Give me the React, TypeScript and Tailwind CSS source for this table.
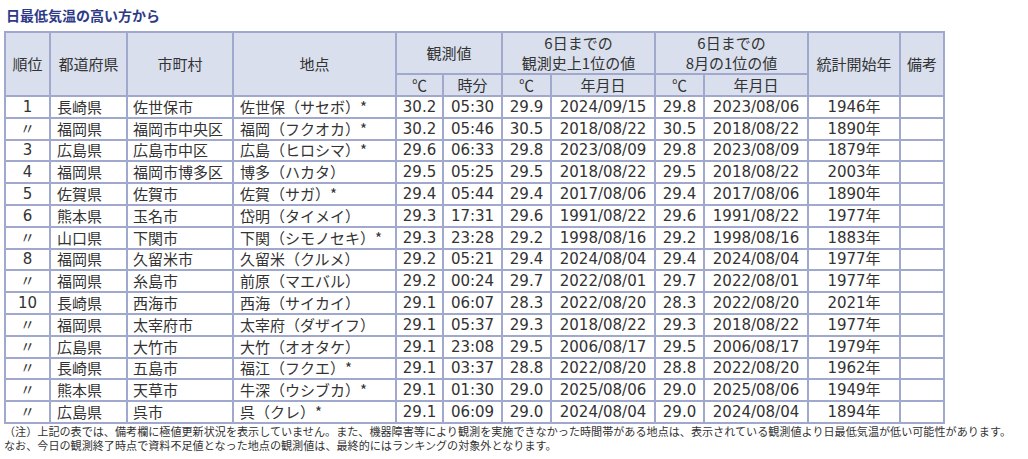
const rows: string[][] = [
  ["1", "長崎県", "佐世保市", "佐世保（サセボ）*", "30.2", "05:30", "29.9", "2024/09/15", "29.8", "2023/08/06", "1946年"],
  ["〃", "福岡県", "福岡市中央区", "福岡（フクオカ）*", "30.2", "05:46", "30.5", "2018/08/22", "30.5", "2018/08/22", "1890年"],
  ["3", "広島県", "広島市中区", "広島（ヒロシマ）*", "29.6", "06:33", "29.8", "2023/08/09", "29.8", "2023/08/09", "1879年"],
  ["4", "福岡県", "福岡市博多区", "博多（ハカタ）", "29.5", "05:25", "29.5", "2018/08/22", "29.5", "2018/08/22", "2003年"],
  ["5", "佐賀県", "佐賀市", "佐賀（サガ）*", "29.4", "05:44", "29.4", "2017/08/06", "29.4", "2017/08/06", "1890年"],
  ["6", "熊本県", "玉名市", "岱明（タイメイ）", "29.3", "17:31", "29.6", "1991/08/22", "29.6", "1991/08/22", "1977年"],
  ["〃", "山口県", "下関市", "下関（シモノセキ）*", "29.3", "23:28", "29.2", "1998/08/16", "29.2", "1998/08/16", "1883年"],
  ["8", "福岡県", "久留米市", "久留米（クルメ）", "29.2", "05:21", "29.4", "2024/08/04", "29.4", "2024/08/04", "1977年"],
  ["〃", "福岡県", "糸島市", "前原（マエバル）", "29.2", "00:24", "29.7", "2022/08/01", "29.7", "2022/08/01", "1977年"],
  ["10", "長崎県", "西海市", "西海（サイカイ）", "29.1", "06:07", "28.3", "2022/08/20", "28.3", "2022/08/20", "2021年"],
  ["〃", "福岡県", "太宰府市", "太宰府（ダザイフ）", "29.1", "05:37", "29.3", "2018/08/22", "29.3", "2018/08/22", "1977年"],
  ["〃", "広島県", "大竹市", "大竹（オオタケ）", "29.1", "23:08", "29.5", "2006/08/17", "29.5", "2006/08/17", "1979年"],
  ["〃", "長崎県", "五島市", "福江（フクエ）*", "29.1", "03:37", "28.8", "2022/08/20", "28.8", "2022/08/20", "1962年"],
  ["〃", "熊本県", "天草市", "牛深（ウシブカ）*", "29.1", "01:30", "29.0", "2025/08/06", "29.0", "2025/08/06", "1949年"],
  ["〃", "広島県", "呉市", "呉（クレ）*", "29.1", "06:09", "29.0", "2024/08/04", "29.0", "2024/08/04", "1894年"],
];

const th = "border-2 border-[#a0a9cd] bg-[#d9dfed] font-normal text-center align-middle p-0";
const td = "border-2 border-[#a0a9cd] p-0 h-[21.8px] align-middle whitespace-nowrap";
// Meiryo-like wide digits for the number columns
const num = "text-center font-['DejaVu_Sans','Noto_Sans_CJK_JP',sans-serif]";

export default function App() {
  return (
    <div className="bg-white min-h-screen pl-[4px] pt-[6px] text-[#333] font-['Noto_Sans_CJK_JP',sans-serif]">
      <div className="text-[14px] leading-[18px] font-bold text-[#2e3a87] pl-[2px]">日最低気温の高い方から</div>

      <table className="mt-[7px] table-fixed border-collapse w-[941px] text-[15px] leading-[18px]">
        <colgroup>
          <col className="w-[45px]" />
          <col className="w-[77px]" />
          <col className="w-[106px]" />
          <col className="w-[163px]" />
          <col className="w-[47px]" />
          <col className="w-[59px]" />
          <col className="w-[49px]" />
          <col className="w-[104px]" />
          <col className="w-[49px]" />
          <col className="w-[104px]" />
          <col className="w-[92px]" />
          <col className="w-[44px]" />
        </colgroup>
        <thead className="leading-[20px]">
          <tr className="h-[42px]">
            <th rowSpan={2} className={th}>順位</th>
            <th rowSpan={2} className={th}>都道府県</th>
            <th rowSpan={2} className={th}>市町村</th>
            <th rowSpan={2} className={th}>地点</th>
            <th colSpan={2} className={th}>観測値</th>
            <th colSpan={2} className={th}>6日までの<br />観測史上1位の値</th>
            <th colSpan={2} className={th}>6日までの<br />8月の1位の値</th>
            <th rowSpan={2} className={th}>統計開始年</th>
            <th rowSpan={2} className={th}>備考</th>
          </tr>
          <tr className="h-[22px]">
            <th className={th}>℃</th>
            <th className={th}>時分</th>
            <th className={th}>℃</th>
            <th className={th}>年月日</th>
            <th className={th}>℃</th>
            <th className={th}>年月日</th>
          </tr>
        </thead>
        <tbody>
          {rows.map((r, i) => (
            <tr key={i}>
              <td className={`${td} ${num}`}>{r[0]}</td>
              <td className={`${td} pl-[6px]`}>{r[1]}</td>
              <td className={`${td} pl-[5px]`}>{r[2]}</td>
              <td className={`${td} pl-[6px]`}>{r[3]}</td>
              <td className={`${td} ${num}`}>{r[4]}</td>
              <td className={`${td} ${num}`}>{r[5]}</td>
              <td className={`${td} ${num}`}>{r[6]}</td>
              <td className={`${td} ${num}`}>{r[7]}</td>
              <td className={`${td} ${num}`}>{r[8]}</td>
              <td className={`${td} ${num}`}>{r[9]}</td>
              <td className={`${td} ${num}`}>{r[10]}</td>
              <td className={td}></td>
            </tr>
          ))}
        </tbody>
      </table>

      <div className="text-[11.1px] leading-[14px] text-[#333] whitespace-nowrap">
        <div>（注）上記の表では、備考欄に極値更新状況を表示していません。また、機器障害等により観測を実施できなかった時間帯がある地点は、表示されている観測値より日最低気温が低い可能性があります。</div>
        <div>なお、今日の観測終了時点で資料不足値となった地点の観測値は、最終的にはランキングの対象外となります。</div>
      </div>
    </div>
  );
}
